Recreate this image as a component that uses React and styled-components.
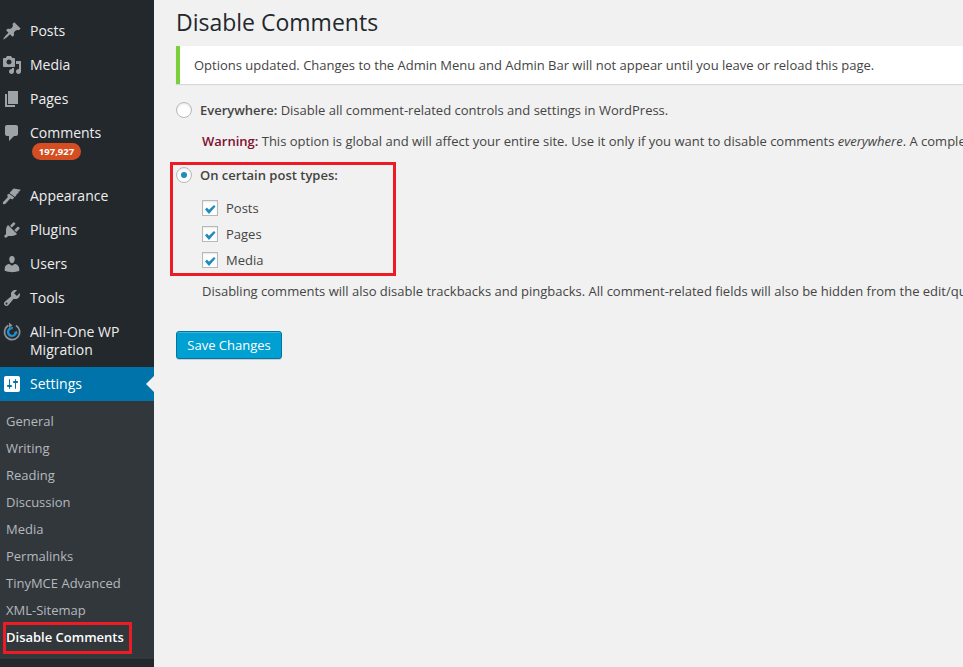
import React from 'react'
import styled, { createGlobalStyle } from 'styled-components'

const paths = {
  posts: 'M10.44 3.02l1.82-1.82 6.36 6.35-1.83 1.82c-1.05-.68-2.48-.57-3.41.36l-.75.75c-.92.93-1.04 2.35-.35 3.41l-1.83 1.82-2.41-2.41-2.8 2.79c-.42.42-3.38 2.71-3.8 2.29s1.86-3.39 2.28-3.81l2.79-2.79L4.1 9.36l1.83-1.82c1.05.69 2.48.57 3.41-.36l.75-.75c.93-.92 1.04-2.35.35-3.41z',
  media: 'M13 11V4c0-.55-.45-1-1-1h-1.67L9 1H5L3.67 3H2c-.55 0-1 .45-1 1v7c0 .55.45 1 1 1h10c.55 0 1-.45 1-1zM7 4.5c1.38 0 2.5 1.12 2.5 2.5S8.38 9.5 7 9.5 4.5 8.38 4.5 7 5.62 4.5 7 4.5zM14 6h5v10.5c0 1.38-1.12 2.5-2.5 2.5S14 17.88 14 16.5s1.12-2.5 2.5-2.5c.17 0 .34.02.5.05V9h-3V6zm-4 8.05V13h2v3.5c0 1.38-1.12 2.5-2.5 2.5S7 17.88 7 16.5 8.12 14 9.5 14c.17 0 .34.02.5.05z',
  pages: 'M6 15V2h10v13H6zm-1 1h8v2H3V5h2v11z',
  comments: 'M5 2h9c1.1 0 2 .9 2 2v7c0 1.1-.9 2-2 2h-2l-5 5v-5H5c-1.1 0-2-.9-2-2V4c0-1.1.9-2 2-2z',
  appearance: 'M11.6 2.6l7.2 1.2-1.7 1.9-1-.1.6.9-1.6 1.8-1-.1.6.9-1.8 2-5.4-4.1 1.8-2c.7-.8 1.5-1.6 2.3-2.4zM7.2 7.8l5 3.8-1.2 1.3c-.5.5-1.2.6-1.8.2l-1-.6-4.4 5c-.6.7-2.1 1-2.7.5s-.3-1.5.3-2.2l4.5-4.8-.5-.9c-.3-.5-.2-1.2.2-1.6z',
  plugins: 'M13.11 4.36L9.87 7.6 8 5.73l3.24-3.24c.35-.34 1.05-.2 1.56.32.52.51.66 1.21.31 1.55zm-8 1.77l.91-1.12 9.01 9.01-1.19.84c-.71.71-2.63 1.16-3.82 1.16H6.14L4.9 17.26c-.59.59-1.54.59-2.12 0-.59-.58-.59-1.53 0-2.12l1.24-1.24v-3.88c0-1.13.4-3.19 1.09-3.89zm7.26 3.97l3.24-3.24c.34-.35 1.04-.21 1.55.31.52.51.66 1.21.31 1.55l-3.24 3.25z',
  users: 'M10 9.25c-2.27 0-2.73-3.44-2.73-3.44C7 4.02 7.82 2 9.97 2c2.16 0 2.98 2.02 2.71 3.81 0 0-.41 3.44-2.68 3.44zm0 2.57L12.72 10c2.39 0 4.52 2.33 4.52 4.53v2.49s-3.65 1.13-7.24 1.13c-3.65 0-7.24-1.13-7.24-1.13v-2.49c0-2.25 1.94-4.48 4.47-4.48z',
  tools: 'M16.68 9.77c-1.34 1.34-3.3 1.67-4.95.99l-5.41 6.52c-.99.99-2.59.99-3.58 0s-.99-2.59 0-3.57l6.52-5.42c-.68-1.65-.35-3.61.99-4.95 1.28-1.28 3.12-1.62 4.72-1.06l-2.89 2.89 2.82 2.82 2.86-2.87c.53 1.58.18 3.39-1.08 4.65zM3.81 16.21c.4.39 1.04.39 1.43 0 .4-.4.4-1.04 0-1.43-.39-.4-1.03-.4-1.43 0-.39.39-.39 1.03 0 1.43z',
  settings: 'M18 16V4c0-1.1-.9-2-2-2H4c-1.1 0-2 .9-2 2v12c0 1.1.9 2 2 2h12c1.1 0 2-.9 2-2zM8 11h1c.55 0 1 .45 1 1s-.45 1-1 1H8v1.5c0 .28-.22.5-.5.5s-.5-.22-.5-.5V13H6c-.55 0-1-.45-1-1s.45-1 1-1h1V5.5c0-.28.22-.5.5-.5s.5.22.5.5V11zm5-2h-1c-.55 0-1-.45-1-1s.45-1 1-1h1V5.5c0-.28.22-.5.5-.5s.5.22.5.5V7h1c.55 0 1 .45 1 1s-.45 1-1 1h-1v5.5c0 .28-.22.5-.5.5s-.5-.22-.5-.5V9z',
}

const topItems = [
  { id: 'posts', label: 'Posts' },
  { id: 'media', label: 'Media' },
  { id: 'pages', label: 'Pages' },
  { id: 'comments', label: 'Comments', badge: '197,927' },
]

const lowerItems = [
  { id: 'appearance', label: 'Appearance' },
  { id: 'plugins', label: 'Plugins' },
  { id: 'users', label: 'Users' },
  { id: 'tools', label: 'Tools' },
]

const subItems = ['General', 'Writing', 'Reading', 'Discussion', 'Media', 'Permalinks', 'TinyMCE Advanced', 'XML-Sitemap']

function MenuIcon({ id, active }) {
  return (
    <IconSvg viewBox="0 0 20 20" $active={active}>
      <path d={paths[id]} />
    </IconSvg>
  )
}

function MigrationIcon() {
  return (
    <IconSvg viewBox="0 0 20 20">
      <path d="M6.4 3.4A7.6 7.6 0 1 0 14 3.5" fill="none" stroke="#8b9095" strokeWidth="1.8" />
      <path d="M7 .6l3.6 2.8L7 5.8z" fill="#8b9095" />
      <path d="M13.8 10.4a3.9 3.9 0 1 1-3-4.2" fill="none" stroke="#1f8fd0" strokeWidth="2.4" />
      <path d="M11.6 10.4l3.2-1.6.8 3.2z" fill="#1f8fd0" />
    </IconSvg>
  )
}

function MenuItem({ id, label, badge }) {
  return (
    <MenuRow>
      <MenuIcon id={id} />
      <MenuLabel>
        {label}
        {badge && <Badge>{badge}</Badge>}
      </MenuLabel>
    </MenuRow>
  )
}

function Check({ label }) {
  return (
    <CheckRow>
      <CheckBox>
        <svg viewBox="0 0 16 16" width="16" height="16">
          <path d="M3 9.4l1.9-1.9 2.1 2.2L12 5l1.5 1.5L7 14z" fill="#1e8cbe" />
        </svg>
      </CheckBox>
      {label}
    </CheckRow>
  )
}

export default function App() {
  return (
    <Page>
      <GlobalStyle />
      <Sidebar>
        <TopGroup>
          {topItems.map((item) => <MenuItem key={item.id} {...item} />)}
        </TopGroup>
        <div>
          {lowerItems.map((item) => <MenuItem key={item.id} {...item} />)}
          <MenuRow>
            <MigrationIcon />
            <MenuLabel>All-in-One WP Migration</MenuLabel>
          </MenuRow>
        </div>
        <ActiveRow>
          <MenuIcon id="settings" active />
          <MenuLabel>Settings</MenuLabel>
        </ActiveRow>
        <SubMenu>
          {subItems.map((item) => <SubItem key={item}>{item}</SubItem>)}
          <SubItemCurrent>Disable Comments</SubItemCurrent>
        </SubMenu>
      </Sidebar>
      <Main>
        <Title>Disable Comments</Title>
        <Notice>Options updated. Changes to the Admin Menu and Admin Bar will not appear until you leave or reload this page.</Notice>
        <FirstOption>
          <Radio />
          <span><strong>Everywhere:</strong> Disable all comment-related controls and settings in WordPress.</span>
        </FirstOption>
        <Hint>
          <WarningWord>Warning:</WarningWord> This option is global and will affect your entire site. Use it only if you want to disable comments <em>everywhere</em>. A complete description of what this option does is available here.
        </Hint>
        <Highlight>
          <OptionRow>
            <Radio $checked />
            <strong>On certain post types:</strong>
          </OptionRow>
          <CheckList>
            <Check label="Posts" />
            <Check label="Pages" />
            <Check label="Media" />
          </CheckList>
        </Highlight>
        <HintAfterBox>Disabling comments will also disable trackbacks and pingbacks. All comment-related fields will also be hidden from the edit/quick-edit screens of the affected posts.</HintAfterBox>
        <SaveButton>Save Changes</SaveButton>
      </Main>
    </Page>
  )
}

const GlobalStyle = createGlobalStyle`
  html, body {
    margin: 0;
    padding: 0;
    background: #f1f1f1;
  }
  body {
    font-family: "Open Sans", "Liberation Sans", sans-serif;
  }
`

const Page = styled.div`
  display: flex;
  width: 963px;
  height: 667px;
  overflow: hidden;
`

const Sidebar = styled.nav`
  flex: 0 0 154px;
  padding-top: 14px;
  background: #23282d;
  box-sizing: border-box;
`

const TopGroup = styled.div`
  padding-bottom: 12px;
`

const MenuRow = styled.div`
  display: flex;
  align-items: flex-start;
  gap: 8px;
  padding: 8px 0 8px 2px;
  color: #eee;
  font-size: 14px;
  line-height: 18px;
`

const ActiveRow = styled(MenuRow)`
  position: relative;
  background: #0073aa;
  color: #fff;
  &::after {
    content: '';
    position: absolute;
    right: 0;
    top: 9px;
    border: 8px solid transparent;
    border-right-color: #f1f1f1;
    border-left-width: 0;
  }
`

const IconSvg = styled.svg`
  flex: 0 0 20px;
  width: 20px;
  height: 20px;
  margin: -1px 0;
  fill: ${(p) => (p.$active ? '#fff' : '#9ea3a8')};
`

const MenuLabel = styled.div`
  flex: 1;
  min-width: 0;
  padding-right: 20px;
`

const Badge = styled.div`
  width: 49px;
  height: 17px;
  margin: 1px 0 -1px 2px;
  border-radius: 9px;
  background: #d54e21;
  color: #fff;
  font-size: 9.5px;
  font-weight: 700;
  line-height: 17px;
  text-align: center;
`

const SubMenu = styled.div`
  padding: 7px 0 8px;
  background: #32373c;
`

const SubItem = styled.div`
  padding: 0 0 0 6px;
  color: #b4b9be;
  font-size: 13px;
  line-height: 27px;
`

const SubItemCurrent = styled(SubItem)`
  position: relative;
  color: #fff;
  font-weight: 600;
  &::after {
    content: '';
    position: absolute;
    left: 3px;
    top: -2px;
    width: 123px;
    height: 26px;
    border: 3px solid #ed1c24;
  }
`

const Main = styled.main`
  flex: 1;
  min-width: 0;
  padding-left: 22px;
  color: #444;
  font-size: 13px;
  line-height: 18px;
  white-space: nowrap;
`

const Title = styled.h1`
  margin: 0;
  padding: 8px 0 9px;
  color: #23282d;
  font-size: 23px;
  font-weight: 400;
  line-height: 29px;
`

const Notice = styled.div`
  padding: 10px 12px 10px 14px;
  border-left: 4px solid #7ad03a;
  background: #fff;
  box-shadow: 0 1px 1px rgba(0, 0, 0, 0.1);
`

const OptionRow = styled.label`
  display: flex;
  align-items: center;
  gap: 8px;
  strong {
    font-weight: 600;
  }
`

const FirstOption = styled(OptionRow)`
  margin-top: 17px;
`

const Radio = styled.span`
  position: relative;
  box-sizing: border-box;
  flex: 0 0 16px;
  width: 16px;
  height: 16px;
  border: 1px solid #b4b9be;
  border-radius: 50%;
  background: #fff;
  box-shadow: inset 0 1px 2px rgba(0, 0, 0, 0.1);
  &::before {
    content: '';
    display: ${(p) => (p.$checked ? 'block' : 'none')};
    position: absolute;
    left: 4px;
    top: 4px;
    width: 6px;
    height: 6px;
    border-radius: 50%;
    background: #1e8cbe;
  }
`

const Hint = styled.p`
  margin: 13px 0 0 26px;
`

const HintAfterBox = styled(Hint)`
  margin-top: 6px;
`

const WarningWord = styled.strong`
  color: #801030;
  font-weight: 600;
`

const Highlight = styled.div`
  width: 217px;
  margin: 12px 0 0 -6px;
  padding: 1px 0 4px 3px;
  border: 3px solid #ed1c24;
`

const CheckList = styled.div`
  display: flex;
  flex-direction: column;
  gap: 8px;
  margin: 15px 0 0 26px;
`

const CheckRow = styled.label`
  display: flex;
  align-items: center;
  gap: 8px;
`

const CheckBox = styled.span`
  box-sizing: border-box;
  display: flex;
  align-items: center;
  justify-content: center;
  flex: 0 0 16px;
  width: 16px;
  height: 16px;
  border: 1px solid #b4b9be;
  background: #fff;
  box-shadow: inset 0 1px 2px rgba(0, 0, 0, 0.1);
  svg {
    flex: none;
  }
`

const SaveButton = styled.button`
  display: block;
  box-sizing: border-box;
  width: 106px;
  height: 28px;
  margin-top: 31px;
  padding: 0;
  border: 1px solid #0074a2;
  border-radius: 3px;
  background: #00a0d2;
  box-shadow: inset 0 1px 0 rgba(120, 200, 230, 0.5), 0 1px 0 rgba(0, 0, 0, 0.15);
  color: #fff;
  font-family: inherit;
  font-size: 13px;
  line-height: 26px;
`
